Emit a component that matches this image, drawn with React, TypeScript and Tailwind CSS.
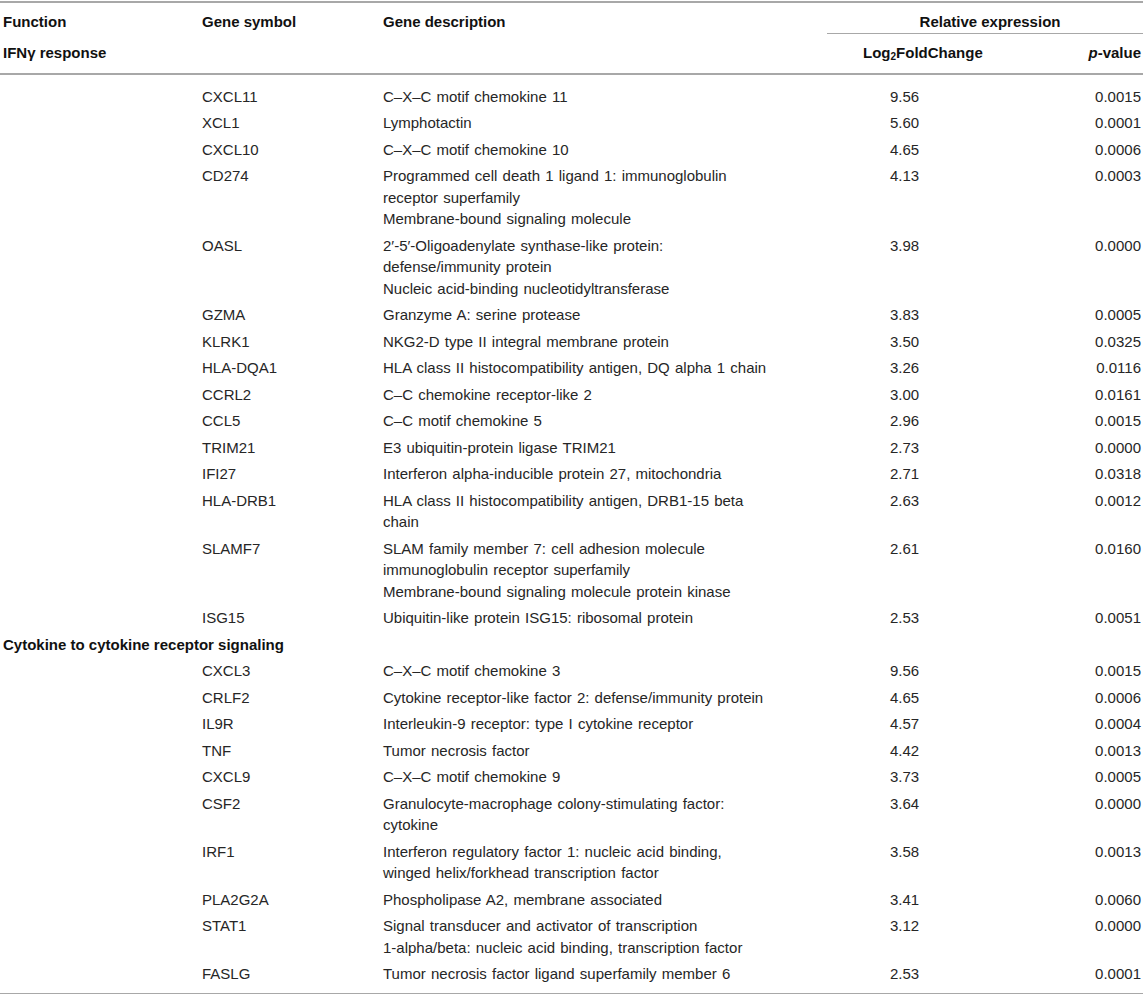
type Row = { gene: string; desc: string[]; fc: string; p: string };

const IFN_ROWS: Row[] = [
  { gene: 'CXCL11', desc: ['C–X–C motif chemokine 11'], fc: '9.56', p: '0.0015' },
  { gene: 'XCL1', desc: ['Lymphotactin'], fc: '5.60', p: '0.0001' },
  { gene: 'CXCL10', desc: ['C–X–C motif chemokine 10'], fc: '4.65', p: '0.0006' },
  {
    gene: 'CD274',
    desc: ['Programmed cell death 1 ligand 1: immunoglobulin', 'receptor superfamily', 'Membrane-bound signaling molecule'],
    fc: '4.13',
    p: '0.0003',
  },
  {
    gene: 'OASL',
    desc: ['2′-5′-Oligoadenylate synthase-like protein:', 'defense/immunity protein', 'Nucleic acid-binding nucleotidyltransferase'],
    fc: '3.98',
    p: '0.0000',
  },
  { gene: 'GZMA', desc: ['Granzyme A: serine protease'], fc: '3.83', p: '0.0005' },
  { gene: 'KLRK1', desc: ['NKG2-D type II integral membrane protein'], fc: '3.50', p: '0.0325' },
  { gene: 'HLA-DQA1', desc: ['HLA class II histocompatibility antigen, DQ alpha 1 chain'], fc: '3.26', p: '0.0116' },
  { gene: 'CCRL2', desc: ['C–C chemokine receptor-like 2'], fc: '3.00', p: '0.0161' },
  { gene: 'CCL5', desc: ['C–C motif chemokine 5'], fc: '2.96', p: '0.0015' },
  { gene: 'TRIM21', desc: ['E3 ubiquitin-protein ligase TRIM21'], fc: '2.73', p: '0.0000' },
  { gene: 'IFI27', desc: ['Interferon alpha-inducible protein 27, mitochondria'], fc: '2.71', p: '0.0318' },
  { gene: 'HLA-DRB1', desc: ['HLA class II histocompatibility antigen, DRB1-15 beta', 'chain'], fc: '2.63', p: '0.0012' },
  {
    gene: 'SLAMF7',
    desc: ['SLAM family member 7: cell adhesion molecule', 'immunoglobulin receptor superfamily', 'Membrane-bound signaling molecule protein kinase'],
    fc: '2.61',
    p: '0.0160',
  },
  { gene: 'ISG15', desc: ['Ubiquitin-like protein ISG15: ribosomal protein'], fc: '2.53', p: '0.0051' },
];

const CYTOKINE_ROWS: Row[] = [
  { gene: 'CXCL3', desc: ['C–X–C motif chemokine 3'], fc: '9.56', p: '0.0015' },
  { gene: 'CRLF2', desc: ['Cytokine receptor-like factor 2: defense/immunity protein'], fc: '4.65', p: '0.0006' },
  { gene: 'IL9R', desc: ['Interleukin-9 receptor: type I cytokine receptor'], fc: '4.57', p: '0.0004' },
  { gene: 'TNF', desc: ['Tumor necrosis factor'], fc: '4.42', p: '0.0013' },
  { gene: 'CXCL9', desc: ['C–X–C motif chemokine 9'], fc: '3.73', p: '0.0005' },
  { gene: 'CSF2', desc: ['Granulocyte-macrophage colony-stimulating factor:', 'cytokine'], fc: '3.64', p: '0.0000' },
  {
    gene: 'IRF1',
    desc: ['Interferon regulatory factor 1: nucleic acid binding,', 'winged helix/forkhead transcription factor'],
    fc: '3.58',
    p: '0.0013',
  },
  { gene: 'PLA2G2A', desc: ['Phospholipase A2, membrane associated'], fc: '3.41', p: '0.0060' },
  {
    gene: 'STAT1',
    desc: ['Signal transducer and activator of transcription', '1-alpha/beta: nucleic acid binding, transcription factor'],
    fc: '3.12',
    p: '0.0000',
  },
  { gene: 'FASLG', desc: ['Tumor necrosis factor ligand superfamily member 6'], fc: '2.53', p: '0.0001' },
];

const COLS = 'grid grid-cols-[202px_181px_444px_183px_1fr]';

const DataRow = ({ row }: { row: Row }) => (
  <div className={`${COLS} py-[2.5px]`}>
    <div />
    <div>{row.gene}</div>
    <div className="[word-spacing:1px]">
      {row.desc.map((line) => (
        <div key={line}>{line}</div>
      ))}
    </div>
    <div className="pl-[63px]">{row.fc}</div>
    <div className="text-right pr-[2px]">{row.p}</div>
  </div>
);

const SectionRow = ({ title }: { title: string }) => (
  <div className="py-[2.5px] pl-[3px] font-bold text-[#111]">{title}</div>
);

export default function App() {
  return (
    <div
      className="w-[1143px] bg-white text-[15px] leading-[21.5px] text-[#262626] pt-[1px]"
      style={{ fontFamily: '"Liberation Sans", Arial, sans-serif' }}
    >
      {/* header */}
      <div className="h-[2px] bg-[#a8a8a8]" />
      <div className={`${COLS} font-bold text-[#111]`}>
        <div className="pl-[3px] pt-[8px]">Function</div>
        <div className="pt-[8px]">Gene symbol</div>
        <div className="pt-[8px]">Gene description</div>
        <div className="col-span-2 pt-[8px] border-b border-[#a8a8a8] text-center pl-[10px]">Relative expression</div>

        <div className="pl-[3px] pt-[8px] pb-[10px]">IFNγ response</div>
        <div />
        <div />
        <div className="pl-[36px] pt-[8px] pb-[10px]">
          Log<sub className="text-[10px]">2</sub>FoldChange
        </div>
        <div className="text-right pr-[2px] pt-[8px] pb-[10px]">
          <span className="italic">p</span>-value
        </div>
      </div>
      <div className="h-[2px] bg-[#a8a8a8]" />

      {/* body */}
      <div className="pt-[8px] pb-[6px]">
        {IFN_ROWS.map((row) => (
          <DataRow key={row.gene} row={row} />
        ))}
        <SectionRow title="Cytokine to cytokine receptor signaling" />
        {CYTOKINE_ROWS.map((row) => (
          <DataRow key={row.gene} row={row} />
        ))}
      </div>
      <div className="h-[2px] bg-[#a8a8a8]" />
    </div>
  );
}
